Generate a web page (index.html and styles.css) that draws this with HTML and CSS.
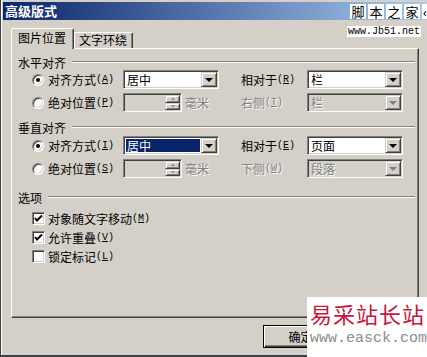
FILE: index.html
```html
<!DOCTYPE html>
<html lang="zh-CN">
<head>
  <meta charset="UTF-8">
  <title>高级版式</title>
  <link rel="stylesheet" href="styles.css">
</head>
<body>
  <div class="dialog">
    <div class="titlebar">高级版式</div>

    <div class="body">
      <div class="tabs">
        <div class="tab active">图片位置</div>
        <div class="tab">文字环绕</div>
      </div>

      <div class="panel">
        <div class="group">
          <div class="group-head"><span>水平对齐</span></div>
          <div class="grid">
            <div class="opt"><span class="radio on"></span>对齐方式<span class="key">(<u>A</u>)</span></div>
            <div class="combo"><span class="val">居中</span><span class="drop"></span></div>
            <div class="lbl">相对于<span class="key">(<u>R</u>)</span></div>
            <div class="combo"><span class="val">栏</span><span class="drop"></span></div>

            <div class="opt"><span class="radio"></span>绝对位置<span class="key">(<u>P</u>)</span></div>
            <div class="spin-wrap">
              <div class="spin"><span class="spin-btns"><i class="up"></i><i class="down"></i></span></div>
              <span class="unit">毫米</span>
            </div>
            <div class="lbl off">右侧<span class="key">(<u>T</u>)</span></div>
            <div class="combo off"><span class="val">栏</span><span class="drop"></span></div>
          </div>
        </div>

        <div class="group group-vert">
          <div class="group-head"><span>垂直对齐</span></div>
          <div class="grid grid-vert">
            <div class="opt"><span class="radio on"></span>对齐方式<span class="key">(<u>I</u>)</span></div>
            <div class="combo"><span class="val sel">居中</span><span class="drop"></span></div>
            <div class="lbl">相对于<span class="key">(<u>E</u>)</span></div>
            <div class="combo"><span class="val">页面</span><span class="drop"></span></div>

            <div class="opt"><span class="radio"></span>绝对位置<span class="key">(<u>S</u>)</span></div>
            <div class="spin-wrap">
              <div class="spin"><span class="spin-btns"><i class="up"></i><i class="down"></i></span></div>
              <span class="unit">毫米</span>
            </div>
            <div class="lbl off">下侧<span class="key">(<u>W</u>)</span></div>
            <div class="combo off"><span class="val">段落</span><span class="drop"></span></div>
          </div>
        </div>

        <div class="group group-opts">
          <div class="group-head"><span>选项</span></div>
          <div class="checks">
            <div class="check-row">
              <span class="check"><svg width="9" height="9" viewBox="0 0 9 9"><polyline points="1,4 3,6.5 8,1.5" fill="none" stroke="#000" stroke-width="2"/></svg></span>
              对象随文字移动<span class="key">(<u>M</u>)</span>
            </div>
            <div class="check-row">
              <span class="check"><svg width="9" height="9" viewBox="0 0 9 9"><polyline points="1,4 3,6.5 8,1.5" fill="none" stroke="#000" stroke-width="2"/></svg></span>
              允许重叠<span class="key">(<u>V</u>)</span>
            </div>
            <div class="check-row">
              <span class="check"></span>
              锁定标记<span class="key">(<u>L</u>)</span>
            </div>
          </div>
        </div>
      </div>

      <div class="buttons">
        <button class="btn default">确定</button>
        <button class="btn">取消</button>
      </div>
    </div>

    <div class="wm-top">
      <b>脚</b><b>本</b><b>之</b><b>家</b><b class="wm-help">‹</b>
    </div>
    <div class="wm-url">www.Jb51.net</div>

    <div class="wm-bottom">
      <div class="wm-cn">易采站长站</div>
      <div class="wm-en">www.easck.com</div>
    </div>
  </div>
</body>
</html>
```

FILE: styles.css
```css
* {
  box-sizing: border-box;
}

body {
  margin: 0;
  background: #d4d0c8;
  font-family: "Noto Sans CJK SC", "Liberation Sans", sans-serif;
  font-size: 12px;
  color: #000;
  overflow: hidden;
}

.dialog {
  position: relative;
  width: 427px;
  height: 357px;
  background: #d4d0c8;
  border-left: 1px solid #404040;
  border-bottom: 2px solid #404040;
  box-shadow: inset 1px 0 #fff;
  padding: 2px 0 0 2px;
}

.titlebar {
  height: 18px;
  padding-left: 2px;
  background: linear-gradient(to right, #0a246a, #a6caf0);
  color: #fff;
  font-weight: bold;
  font-size: 13px;
  line-height: 18px;
}

.body {
  padding: 8px 0 0 8px;
}

/* tabs */
.tabs {
  display: flex;
  align-items: flex-end;
  height: 20px;
}

.tab {
  height: 16px;
  padding: 0 5px 0 4px;
  line-height: 14px;
  border: 1px solid;
  border-bottom: none;
  border-color: #fff #404040 transparent #fff;
  box-shadow: inset -1px 0 #808080;
  border-radius: 2px 2px 0 0;
}

.tab.active {
  position: relative;
  z-index: 1;
  height: 21px;
  margin-bottom: -1px;
  padding: 0 7px 0 6px;
  line-height: 18px;
  background: #d4d0c8;
}

/* panel */
.panel {
  width: 408px;
  height: 270px;
  padding: 6px 3px 0 6px;
  border: 1px solid;
  border-color: #fff #404040 #404040 #fff;
  box-shadow: inset -1px -1px #808080;
}

.group-head {
  display: flex;
  align-items: center;
  gap: 6px;
  height: 14px;
}

.group-head::after {
  content: "";
  flex: 1;
  border-top: 1px solid #808080;
  border-bottom: 1px solid #fff;
}

.group-vert {
  margin-top: 8px;
}

.group-opts {
  margin-top: 12px;
}

.grid {
  display: grid;
  grid-template-columns: 91px 118px 66px 96px;
  grid-auto-rows: 19px;
  row-gap: 4px;
  align-items: center;
  margin: 1px 0 0 14px;
}

.grid-vert {
  margin-top: 2px;
}

.opt,
.lbl {
  display: flex;
  align-items: center;
  height: 19px;
}

.key {
  font-family: "Liberation Mono", monospace;
  font-size: 10px;
}

.off {
  color: #808080;
  text-shadow: 1px 1px #fff;
}

.radio {
  position: relative;
  width: 12px;
  height: 12px;
  margin-right: 4px;
  border-radius: 50%;
  background: #fff;
  border: 1px solid;
  border-color: #808080 #fff #fff #808080;
  box-shadow: inset 1px 1px #404040, inset -1px -1px #d4d0c8;
}

.radio.on::after {
  content: "";
  position: absolute;
  left: 3px;
  top: 3px;
  width: 4px;
  height: 4px;
  border-radius: 50%;
  background: #000;
}

/* combo boxes */
.combo {
  display: flex;
  width: 96px;
  height: 19px;
  padding: 1px;
  background: #fff;
  border: 1px solid;
  border-color: #808080 #fff #fff #808080;
  box-shadow: inset 1px 1px #404040, inset -1px -1px #d4d0c8;
}

.val {
  flex: 1;
  padding-left: 2px;
  line-height: 15px;
}

.val.sel {
  margin: 1px;
  padding-left: 1px;
  line-height: 13px;
  background: #0a246a;
  color: #fff;
}

.drop {
  display: flex;
  align-items: center;
  justify-content: center;
  width: 16px;
  background: #d4d0c8;
  border: 1px solid;
  border-color: #d4d0c8 #404040 #404040 #d4d0c8;
  box-shadow: inset 1px 1px #fff, inset -1px -1px #808080;
}

.drop::before {
  content: "";
  border-left: 4px solid transparent;
  border-right: 4px solid transparent;
  border-top: 4px solid #000;
  margin-top: 1px;
}

.combo.off {
  background: #d4d0c8;
}

.combo.off .drop::before {
  border-top-color: #808080;
}

/* spinner */
.spin-wrap {
  display: flex;
  align-items: center;
}

.spin {
  display: flex;
  justify-content: flex-end;
  width: 59px;
  height: 19px;
  padding: 1px;
  background: #d4d0c8;
  border: 1px solid;
  border-color: #808080 #fff #fff #808080;
  box-shadow: inset 1px 1px #404040, inset -1px -1px #d4d0c8;
}

.spin-btns {
  display: flex;
  flex-direction: column;
  width: 15px;
}

.spin-btns i {
  display: flex;
  flex: 1;
  align-items: center;
  justify-content: center;
  border: 1px solid;
  border-color: #d4d0c8 #404040 #404040 #d4d0c8;
  box-shadow: inset 1px 1px #fff, inset -1px -1px #808080;
}

.spin-btns i::before {
  content: "";
  border-left: 2px solid transparent;
  border-right: 2px solid transparent;
}

.spin-btns .up::before {
  border-bottom: 2px solid #808080;
}

.spin-btns .down::before {
  border-top: 2px solid #808080;
}

.unit {
  margin-left: 3px;
  color: #808080;
  text-shadow: 1px 1px #fff;
}

/* checkboxes */
.checks {
  margin: 5px 0 0 14px;
}

.check-row {
  display: flex;
  align-items: center;
  height: 19px;
}

.check {
  display: flex;
  align-items: center;
  justify-content: center;
  width: 13px;
  height: 13px;
  margin-right: 3px;
  background: #fff;
  border: 1px solid;
  border-color: #808080 #fff #fff #808080;
  box-shadow: inset 1px 1px #404040, inset -1px -1px #d4d0c8;
}

/* buttons */
.buttons {
  display: flex;
  justify-content: flex-end;
  gap: 6px;
  width: 408px;
  margin-top: 7px;
}

.btn {
  width: 75px;
  height: 23px;
  padding: 0;
  font: inherit;
  color: #000;
  background: #d4d0c8;
  border: 1px solid;
  border-color: #fff #404040 #404040 #fff;
  box-shadow: inset -1px -1px #808080;
}

.btn.default {
  border-color: #000;
  box-shadow: inset 1px 1px #fff, inset -1px -1px #404040, inset -2px -2px #808080;
}

/* watermarks laid over the dialog */
.wm-top {
  position: absolute;
  left: 349px;
  top: 4px;
  display: flex;
  gap: 2px;
}

.wm-top b {
  width: 16px;
  height: 15px;
  background: #fff;
  font-size: 13px;
  font-weight: normal;
  line-height: 15px;
  text-align: center;
}

.wm-top .wm-help {
  width: 6px;
  overflow: hidden;
  font-weight: bold;
  font-size: 12px;
}

.wm-url {
  position: absolute;
  left: 346px;
  top: 26px;
  padding: 0 1px;
  background: #fff;
  font-family: "Liberation Mono", monospace;
  font-size: 10px;
  line-height: 11px;
}

.wm-bottom {
  position: absolute;
  left: 306px;
  top: 297px;
  width: 121px;
  height: 60px;
  background: #fff;
  overflow: hidden;
}

.wm-cn {
  height: 30px;
  margin-top: 3px;
  padding-left: 3px;
  color: #c8163c;
  font-size: 22px;
  line-height: 26px;
  letter-spacing: 1px;
  white-space: nowrap;
}

.wm-en {
  padding-left: 3px;
  color: #8c8c8c;
  font-family: "Liberation Mono", monospace;
  font-size: 15px;
  line-height: 17px;
  white-space: nowrap;
}
```
